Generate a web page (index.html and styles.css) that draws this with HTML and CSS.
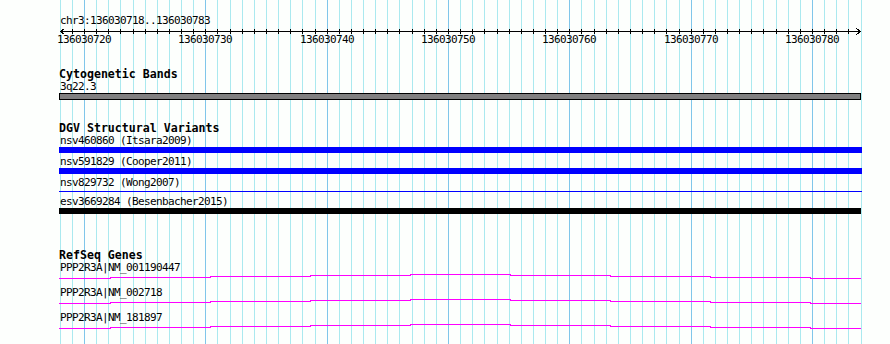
FILE: index.html
```html
<!DOCTYPE html>
<html lang="en">
<head>
    <meta charset="UTF-8">
    <meta name="viewport" content="width=device-width, initial-scale=1.0">
    <title>chr3:136030718..136030783</title>
    <link rel="stylesheet" href="styles.css">
</head>
<body>
    <div class="panel">
        <svg class="grid" id="grid" width="890" height="344"></svg>

        <div class="tracks">
            <div class="ruler-title">chr3:136030718..136030783</div>
            <svg class="ruler" id="ruler" width="890" height="20">
                <rect class="axis" x="60" y="4" width="801" height="1"></rect>
                <polyline class="arrow" points="64.5,1.5 60.5,4.5 64.5,7.5"></polyline>
                <polyline class="arrow" points="856.5,1.5 860.5,4.5 856.5,7.5"></polyline>
                <g id="ticks"></g>
                <text class="tick-label" x="84" y="16">136030720</text>
                <text class="tick-label" x="205" y="16">136030730</text>
                <text class="tick-label" x="327" y="16">136030740</text>
                <text class="tick-label" x="448" y="16">136030750</text>
                <text class="tick-label" x="569" y="16">136030760</text>
                <text class="tick-label" x="691" y="16">136030770</text>
                <text class="tick-label" x="812" y="16">136030780</text>
            </svg>

            <section class="track cyto">
                <h2 class="track-title">Cytogenetic Bands</h2>
                <div class="feature-label">3q22.3</div>
                <div class="band"></div>
            </section>

            <section class="track dgv">
                <h2 class="track-title">DGV Structural Variants</h2>
                <div class="sv-row">
                    <div class="feature-label">nsv460860 (Itsara2009)</div>
                    <div class="sv sv-blue"></div>
                </div>
                <div class="sv-row">
                    <div class="feature-label">nsv591829 (Cooper2011)</div>
                    <div class="sv sv-blue"></div>
                </div>
                <div class="sv-row">
                    <div class="feature-label">nsv829732 (Wong2007)</div>
                    <div class="sv sv-thin"></div>
                </div>
                <div class="sv-row">
                    <div class="feature-label">esv3669284 (Besenbacher2015)</div>
                    <div class="sv sv-black"></div>
                </div>
            </section>

            <section class="track refseq">
                <h2 class="track-title">RefSeq Genes</h2>
                <div class="gene">
                    <div class="feature-label">PPP2R3A|NM_001190447</div>
                    <svg class="gene-line" width="890" height="12"><path d="M59 4.5H110V3.5H210V2.5H310V1.5H410V0.5H510V1.5H610V2.5H710V3.5H810V4.5H861"></path></svg>
                </div>
                <div class="gene">
                    <div class="feature-label">PPP2R3A|NM_002718</div>
                    <svg class="gene-line" width="890" height="12"><path d="M59 4.5H110V3.5H210V2.5H310V1.5H410V0.5H510V1.5H610V2.5H710V3.5H810V4.5H861"></path></svg>
                </div>
                <div class="gene">
                    <div class="feature-label">PPP2R3A|NM_181897</div>
                    <svg class="gene-line" width="890" height="12"><path d="M59 4.5H110V3.5H210V2.5H310V1.5H410V0.5H510V1.5H610V2.5H710V3.5H810V4.5H861"></path></svg>
                </div>
            </section>
        </div>
    </div>

    <script>
        // one grid line per base, 136030718..136030784
        const NS = "http://www.w3.org/2000/svg";
        const grid = document.getElementById("grid");
        const ticks = document.getElementById("ticks");
        const pxPerBase = 12.1333;

        for (let i = 0; i <= 66; i++) {
            const x = Math.round(84 + (i - 2) * pxPerBase);
            const major = (i % 10) === 2;

            const line = document.createElementNS(NS, "rect");
            line.setAttribute("x", x);
            line.setAttribute("y", 0);
            line.setAttribute("width", 1);
            line.setAttribute("height", 344);
            line.setAttribute("class", major ? "grid-major" : "grid-minor");
            grid.appendChild(line);

            if (i > 0 && i < 66) {
                const tick = document.createElementNS(NS, "rect");
                tick.setAttribute("x", x);
                tick.setAttribute("y", 2);
                tick.setAttribute("width", 1);
                tick.setAttribute("height", 5);
                tick.setAttribute("class", "tick");
                ticks.appendChild(tick);
            }
        }
    </script>
</body>
</html>
```

FILE: styles.css
```css
/* Base */
body {
    margin: 0;
    background-color: #fdfffd;
    color: #000;
    font-family: "DejaVu Sans Mono", "Liberation Mono", monospace;
    font-size: 11px;
    letter-spacing: -0.62px;
}

.panel {
    position: relative;
    width: 890px;
    height: 344px;
    overflow: hidden;
}

/* Background grid */
.grid {
    position: absolute;
    top: 0;
    left: 0;
}

.grid-minor {
    fill: #aae9ef;
}

.grid-major {
    fill: #80c6ea;
}

.tracks {
    position: relative;
    padding-top: 14px;
}

/* Ruler */
.ruler-title {
    line-height: 13px;
    padding-left: 60px;
}

.ruler {
    display: block;
    shape-rendering: crispEdges;
}

.axis,
.tick {
    fill: #000;
}

.arrow {
    fill: none;
    stroke: #000;
    stroke-width: 1;
}

.tick-label {
    font-family: "DejaVu Sans Mono", "Liberation Mono", monospace;
    font-size: 11px;
    letter-spacing: -0.62px;
    text-anchor: middle;
    fill: #000;
}

/* Tracks */
.track-title {
    margin: 0;
    padding-left: 59px;
    font-size: 11.6px;
    font-weight: bold;
    letter-spacing: 0;
    line-height: 12px;
}

.feature-label {
    line-height: 13px;
    padding-left: 60px;
    white-space: pre;
}

.cyto {
    margin-top: 21px;
}

.band {
    box-sizing: border-box;
    margin-left: 59px;
    width: 802px;
    height: 7px;
    border: 1px solid #000;
    background-color: #808080;
}

.dgv {
    margin-top: 22px;
}

.sv-row {
    margin-bottom: 2px;
}

.sv {
    margin-left: 59px;
    width: 803px;
    height: 6px;
}

.sv-blue {
    background-color: #0000ff;
}

.sv-thin {
    height: 1px;
    margin-top: 2px;
    margin-bottom: 3px;
    background-color: #0000ff;
}

.sv-black {
    width: 802px;
    background-color: #000;
}

.refseq {
    margin-top: 35px;
}

.gene-line {
    display: block;
    shape-rendering: crispEdges;
}

.gene-line path {
    fill: none;
    stroke: #ff00ff;
    stroke-width: 1;
}
```
